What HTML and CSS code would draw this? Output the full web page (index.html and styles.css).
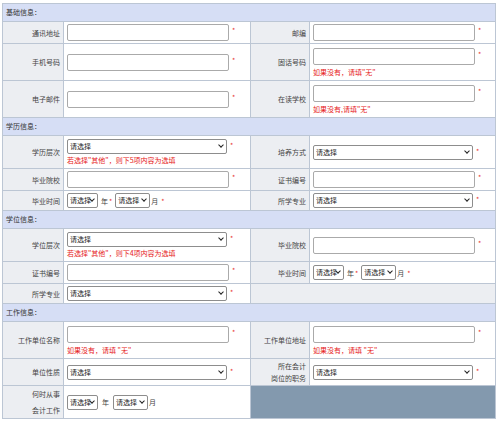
FILE: index.html
```html
<!DOCTYPE html>
<html lang="zh">
<head>
<meta charset="utf-8">
<link rel="stylesheet" href="styles.css">
</head>
<body>
<table class="form">
  <colgroup>
    <col class="c-label1"><col class="c-field1"><col class="c-label2"><col class="c-field2">
  </colgroup>
  <tr><td colspan="4" class="sec">基础信息：</td></tr>
  <tr>
    <td class="lab">通讯地址</td>
    <td class="fld"><div class="line"><input class="txt" type="text"><span class="req">*</span></div></td>
    <td class="lab">邮编</td>
    <td class="fld"><div class="line"><input class="txt" type="text"><span class="req">*</span></div></td>
  </tr>
  <tr>
    <td class="lab">手机号码</td>
    <td class="fld"><div class="line"><input class="txt" type="text"><span class="req">*</span></div></td>
    <td class="lab">固话号码</td>
    <td class="fld hinted"><div class="line"><input class="txt" type="text"><span class="req">*</span></div><div class="hint">如果没有，请填"无"</div></td>
  </tr>
  <tr>
    <td class="lab">电子邮件</td>
    <td class="fld"><div class="line"><input class="txt" type="text"><span class="req">*</span></div></td>
    <td class="lab">在读学校</td>
    <td class="fld hinted"><div class="line"><input class="txt" type="text"><span class="req">*</span></div><div class="hint">如果没有,请填"无"</div></td>
  </tr>
  <tr><td colspan="4" class="sec">学历信息：</td></tr>
  <tr>
    <td class="lab">学历层次</td>
    <td class="fld shinted"><div class="line"><span class="sw sw-l"><select class="sel"><option>请选择</option></select></span><span class="req">*</span></div><div class="hint">若选择"其他"，则下5项内容为选填</div></td>
    <td class="lab">培养方式</td>
    <td class="fld"><div class="line"><span class="sw sw-l"><select class="sel"><option>请选择</option></select></span><span class="req">*</span></div></td>
  </tr>
  <tr>
    <td class="lab">毕业院校</td>
    <td class="fld"><div class="line"><input class="txt" type="text"><span class="req">*</span></div></td>
    <td class="lab">证书编号</td>
    <td class="fld"><div class="line"><input class="txt" type="text"><span class="req">*</span></div></td>
  </tr>
  <tr>
    <td class="lab">毕业时间</td>
    <td class="fld sm"><div class="line mid"><span class="sw sw-y"><select class="sel"><option>请选择</option></select></span><span class="unit">年</span><span class="req r-in">*</span><span class="sw sw-m"><select class="sel"><option>请选择</option></select></span><span class="unit u-tight">月</span><span class="req">*</span></div></td>
    <td class="lab">所学专业</td>
    <td class="fld sm"><div class="line"><span class="sw sw-l"><select class="sel"><option>请选择</option></select></span><span class="req">*</span></div></td>
  </tr>
  <tr><td colspan="4" class="sec">学位信息：</td></tr>
  <tr>
    <td class="lab">学位层次</td>
    <td class="fld shinted"><div class="line"><span class="sw sw-l"><select class="sel"><option>请选择</option></select></span><span class="req">*</span></div><div class="hint">若选择"其他"，则下4项内容为选填</div></td>
    <td class="lab">毕业院校</td>
    <td class="fld"><div class="line"><input class="txt" type="text"><span class="req">*</span></div></td>
  </tr>
  <tr>
    <td class="lab">证书编号</td>
    <td class="fld"><div class="line"><input class="txt" type="text"><span class="req">*</span></div></td>
    <td class="lab">毕业时间</td>
    <td class="fld sm"><div class="line mid"><span class="sw sw-y"><select class="sel"><option>请选择</option></select></span><span class="unit">年</span><span class="req r-in">*</span><span class="sw sw-m"><select class="sel"><option>请选择</option></select></span><span class="unit u-tight">月</span><span class="req">*</span></div></td>
  </tr>
  <tr>
    <td class="lab">所学专业</td>
    <td class="fld sm"><div class="line"><span class="sw sw-l"><select class="sel"><option>请选择</option></select></span><span class="req">*</span></div></td>
    <td colspan="2" class="blank"></td>
  </tr>
  <tr><td colspan="4" class="sec">工作信息：</td></tr>
  <tr>
    <td class="lab">工作单位名称</td>
    <td class="fld hinted"><div class="line"><input class="txt" type="text"><span class="req">*</span></div><div class="hint">如果没有，请填 "无"</div></td>
    <td class="lab">工作单位地址</td>
    <td class="fld hinted"><div class="line"><input class="txt" type="text"><span class="req">*</span></div><div class="hint">如果没有，请填 "无"</div></td>
  </tr>
  <tr>
    <td class="lab">单位性质</td>
    <td class="fld"><div class="line"><span class="sw sw-l"><select class="sel"><option>请选择</option></select></span><span class="req">*</span></div></td>
    <td class="lab two-a">所在会计<br>岗位的职务</td>
    <td class="fld"><div class="line"><span class="sw sw-l"><select class="sel"><option>请选择</option></select></span><span class="req">*</span></div></td>
  </tr>
  <tr>
    <td class="lab two-b">何时从事<br>会计工作</td>
    <td class="fld"><div class="line mid"><span class="sw sw-y"><select class="sel"><option>请选择</option></select></span><span class="unit u-wide">年</span><span class="sw sw-m"><select class="sel"><option>请选择</option></select></span><span class="unit u-tight">月</span></div></td>
    <td colspan="2" class="dark"></td>
  </tr>
</table>
</body>
</html>
```

FILE: styles.css
```css
html, body {
  margin: 0;
  padding: 0;
  background: #ffffff;
}
body {
  padding: 3px 0 0 2px;
  font-family: "Noto Sans CJK SC", "Liberation Sans", sans-serif;
  font-size: 7px;
  color: #333333;
}
.form {
  width: 493px;
  border-collapse: collapse;
  table-layout: fixed;
}
.c-label1 { width: 61px; }
.c-field1 { width: 187px; }
.c-label2 { width: 59px; }
.c-field2 { width: 186px; }
.form td {
  border: 1px solid #bcc6d4;
  padding: 2px 3px;
  line-height: 12px;
  vertical-align: middle;
}
.form td.sec {
  background: #d6def5;
  line-height: 13px;
  padding: 2px 3px;
  color: #333;
}
.form td.lab {
  background: #eceef2;
  text-align: right;
  padding: 0 3px 0 2px;
  color: #444;
}
.form td.lab.two-a {
  line-height: 12px;
  padding-top: 1px;
  padding-bottom: 1px;
}
.form td.lab.two-b {
  line-height: 16px;
}
.form td.fld {
  background: #ffffff;
  white-space: nowrap;
}
.form td.fld.hinted {
  padding-top: 4px;
  padding-bottom: 3px;
}
.form td.fld.shinted {
  padding-top: 3px;
  padding-bottom: 3px;
}
.form td.blank {
  background: #eceef2;
}
.form td.dark {
  background: #8399ae;
}
.line {
  display: flex;
  align-items: flex-start;
}
.line.mid {
  align-items: center;
}
.txt {
  box-sizing: border-box;
  display: block;
  width: 162px;
  height: 17px;
  margin: 0;
  padding: 0 3px;
  border: 1px solid #aaaaaa;
  border-radius: 2px;
  font-family: inherit;
  font-size: 7px;
  background: #fff;
}
.sw {
  position: relative;
  display: block;
  height: 15px;
}
.sw::after {
  content: "";
  position: absolute;
  right: 4px;
  top: 4px;
  width: 3px;
  height: 3px;
  border-right: 1.3px solid #222;
  border-bottom: 1.3px solid #222;
  transform: rotate(45deg);
  pointer-events: none;
}
.sw-l { width: 160px; }
.sw-y { width: 31px; }
.sw-m { width: 35px; }
.sel {
  -webkit-appearance: none;
  appearance: none;
  box-sizing: border-box;
  display: block;
  width: 100%;
  height: 15px;
  margin: 0;
  padding: 0 2px;
  border: 1px solid #8d8d8d;
  border-radius: 2px;
  font-family: inherit;
  font-size: 7px;
  line-height: 13px;
  color: #222;
  background: #fff;
}
.unit {
  color: #444;
  margin-left: 3px;
  line-height: 12px;
}
.unit.u-tight {
  margin-left: 1px;
}
.unit.u-wide {
  margin-left: 4px;
  margin-right: 4px;
}
.req {
  color: #e83030;
  font-size: 7px;
  margin-left: 3px;
  line-height: 12px;
}
.req.r-in {
  margin-left: 1px;
  margin-right: 3px;
}
.line.mid .req {
  align-self: center;
}
.hint {
  color: #e62020;
  font-size: 7px;
  line-height: 10px;
  margin-top: 2px;
}
.form td.fld.shinted .hint {
  margin-top: 1px;
}
```
